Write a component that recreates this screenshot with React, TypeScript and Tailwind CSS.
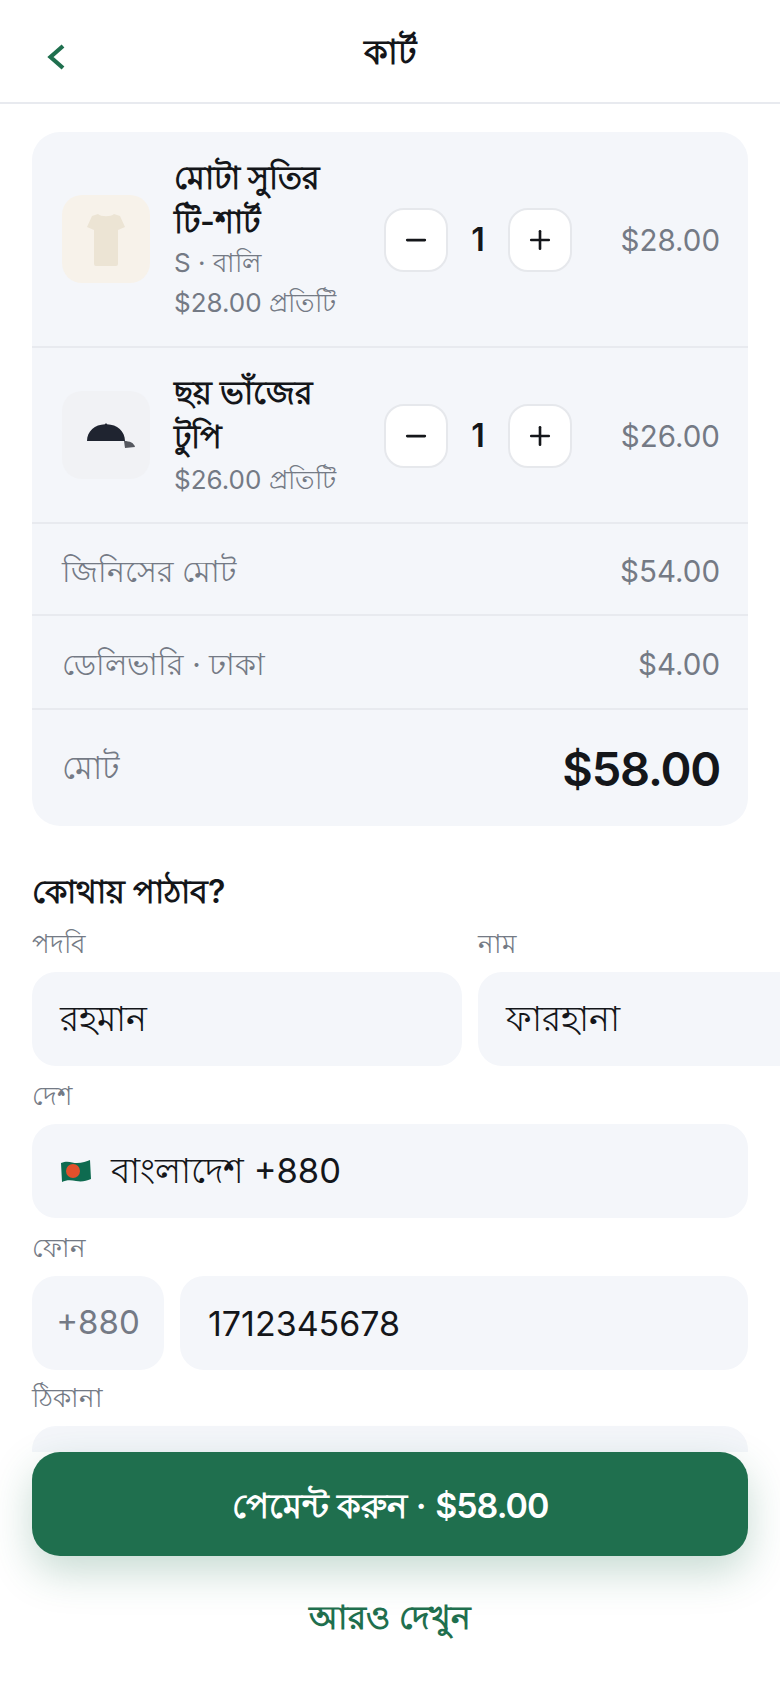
import { Minus, Plus } from "lucide-react";

const font = "font-['Inter','Noto_Sans',sans-serif]";

function Stepper() {
  return (
    <div className="mt-[2px] flex items-center">
      <button className="flex h-[64px] w-[64px] items-center justify-center rounded-[20px] border-2 border-[#e6e8ec] bg-white text-[#14161a]">
        <Minus size={30} strokeWidth={2.2} />
      </button>
      <span className="w-[60px] text-center text-[32px] font-semibold text-[#14161a]">1</span>
      <button className="flex h-[64px] w-[64px] items-center justify-center rounded-[20px] border-2 border-[#e6e8ec] bg-white text-[#14161a]">
        <Plus size={30} strokeWidth={2.1} />
      </button>
    </div>
  );
}

function Shirt() {
  return (
    <svg width="38" height="53" viewBox="0 0 38 53">
      <path
        d="M11 1 C14 4 24 4 27 1 L33 3 L38 14 L31 17 L31 51 Q31 53 29 53 L9 53 Q7 53 7 51 L7 17 L0 14 L5 3 Z"
        fill="#ece4d4"
      />
    </svg>
  );
}

function Cap() {
  return (
    <svg className="ml-[10px]" width="48" height="25" viewBox="0 0 48 25">
      <path d="M0 18 C0 8 8 1.5 18 1.2 L19 0 L20 1.2 C30 1.5 38 8 38 18 Z" fill="#1f2430" />
      <path d="M37 18 C43 18 47 20 48 24 L38 25 Z" fill="#55585f" />
    </svg>
  );
}

function Item({ title, sub, each, price, thumb, icon, height }: { title: string[]; sub?: string; each: string; price: string; thumb: string; icon: React.ReactNode; height: string }) {
  return (
    <div className={`flex items-center border-b-2 border-[#e8eaef] pl-[30px] pr-[28px] ${height}`}>
      <div className={`flex h-[88px] w-[88px] shrink-0 items-center justify-center rounded-[20px] ${thumb}`}>{icon}</div>
      <div className="ml-[24px] w-[210px] shrink-0">
        {title.map((t) => (
          <div key={t} className="text-[32px] font-semibold leading-[44px] text-[#14161a]">{t}</div>
        ))}
        {sub && <div className="text-[26px] leading-[38px] text-[#747a85]">{sub}</div>}
        <div className="mt-[2px] text-[26px] leading-[38px] text-[#747a85]">{each}</div>
      </div>
      <Stepper />
      <div className="ml-auto pt-[3px] text-[29.5px] text-[#747a85]">{price}</div>
    </div>
  );
}

function SummaryRow({ label, value, height }: { label: string; value: string; height: string }) {
  return (
    <div className={`flex items-center justify-between border-b-2 border-[#e8eaef] pl-[30px] pr-[28px] pt-[4px] text-[#747a85] ${height}`}>
      <span className="text-[29.5px]">{label}</span>
      <span className="text-[29.5px]">{value}</span>
    </div>
  );
}

function Label({ children }: { children: React.ReactNode }) {
  return <div className="h-[29px] text-[26px] leading-[29px] text-[#747a85]">{children}</div>;
}

function Field({ children, className = "" }: { children?: React.ReactNode; className?: string }) {
  return (
    <div className={`flex h-[94px] items-center rounded-[24px] bg-[#f4f6fa] px-[28px] text-[34.5px] ${className}`}>
      {children}
    </div>
  );
}

export default function App() {
  return (
    <div className={`relative h-[1688px] w-[780px] overflow-hidden bg-white ${font}`}>
      <header className="relative flex h-[104px] items-center justify-center border-b-2 border-[#e8eaef]">
        <svg className="absolute left-[47px] top-[44px]" width="18" height="26" viewBox="0 0 18 26" fill="none">
          <path d="M16 2 L3.5 13 L16 24" stroke="#1f6f4e" strokeWidth="4.2" />
        </svg>
        <h1 className="text-[34px] font-semibold text-[#14161a]">কার্ট</h1>
      </header>

      <section className="mx-[32px] mt-[28px] overflow-hidden rounded-[28px] bg-[#f4f6fa]">
        <Item
          title={["মোটা সুতির", "টি-শার্ট"]}
          sub="S · বালি"
          each="$28.00 প্রতিটি"
          price="$28.00"
          thumb="bg-[#f7f2ea]"
          icon={<Shirt />}
          height="h-[216px]"
        />
        <Item
          title={["ছয় ভাঁজের", "টুপি"]}
          each="$26.00 প্রতিটি"
          price="$26.00"
          thumb="bg-[#f1f2f5]"
          icon={<Cap />}
          height="h-[176px]"
        />
        <SummaryRow label="জিনিসের মোট" value="$54.00" height="h-[92px]" />
        <SummaryRow label="ডেলিভারি · ঢাকা" value="$4.00" height="h-[94px]" />
        <div className="flex h-[116px] items-center justify-between pl-[30px] pr-[28px]">
          <span className="text-[32px] text-[#747a85]">মোট</span>
          <span className="pt-[2px] text-[47px] font-semibold tracking-[-1.2px] text-[#14161a]">$58.00</span>
        </div>
      </section>

      <section className="mx-[32px] mt-[44px]">
        <h2 className="text-[32px] font-semibold leading-[44px] text-[#14161a]">কোথায় পাঠাব?</h2>
        <div className="mt-[15px] flex gap-[16px]">
          <div className="w-[430px] shrink-0">
            <Label>পদবি</Label>
            <Field className="mt-[14px] text-[#14161a]">রহমান</Field>
          </div>
          <div className="w-[430px] shrink-0">
            <Label>নাম</Label>
            <Field className="mt-[14px] text-[#14161a]">ফারহানা</Field>
          </div>
        </div>
        <div className="mt-[15px]">
          <Label>দেশ</Label>
          <Field className="mt-[14px] gap-[20px] text-[#14161a]">
            <svg width="31" height="22" viewBox="0 0 31 22">
              <path d="M1 3 C8 0 12 3 17 3 C22 3 27 1 30 0 L31 19 C26 21 22 22 16 21 C11 20 6 20 2 22 Z" fill="#0e6b50" />
              <circle cx="13" cy="11" r="7" fill="#e2502b" />
            </svg>
            <span>বাংলাদেশ +880</span>
          </Field>
        </div>
        <div className="mt-[15px]">
          <Label>ফোন</Label>
          <div className="mt-[14px] flex gap-[16px]">
            <Field className="w-[132px] shrink-0 justify-center !px-0 !text-[33px] text-[#747a85]">+880</Field>
            <Field className="flex-1 !text-[34px] text-[#14161a]">1712345678</Field>
          </div>
        </div>
        <div className="mt-[13px]">
          <Label>ঠিকানা</Label>
          <Field className="mt-[14px]" />
        </div>
      </section>

      <div className="absolute bottom-0 left-0 right-0 h-[236px] bg-white px-[32px]">
        <button className="h-[104px] w-full rounded-[28px] bg-[#1f6f4e] pt-[2px] text-[34px] font-semibold text-white shadow-[0_16px_40px_rgba(31,111,78,0.25)]">
          পেমেন্ট করুন · <span className="tracking-[-1px]">$58.00</span>
        </button>
        <div className="mt-[37px] text-center text-[33px] font-semibold text-[#1f6f4e]">আরও দেখুন</div>
      </div>
    </div>
  );
}
